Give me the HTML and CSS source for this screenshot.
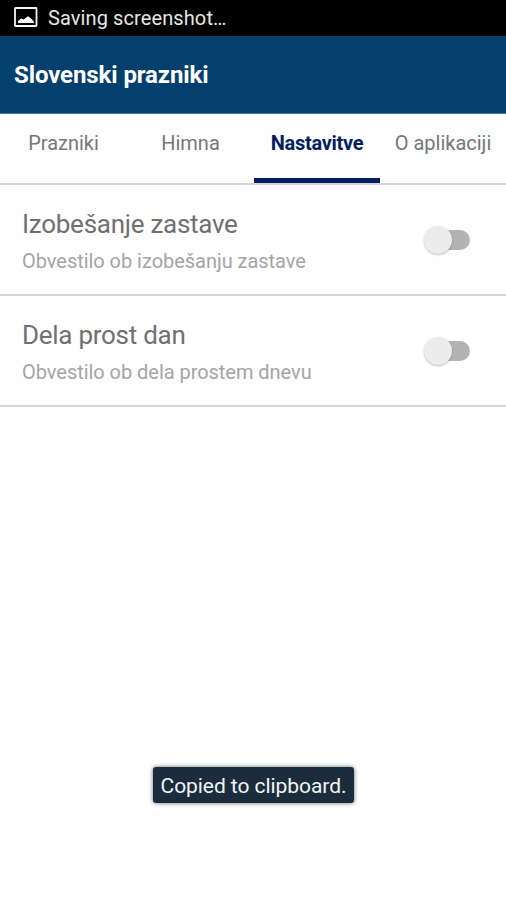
FILE: index.html
```html
<!DOCTYPE html>
<html lang="sl">
<head>
<meta charset="utf-8">
<title>Slovenski prazniki</title>
<link rel="stylesheet" href="styles.css">
</head>
<body>
<div class="screen">
  <div class="status">
    <svg class="status-icon" width="24" height="20" viewBox="0 0 24 20"><rect x="1" y="1" width="21.5" height="18" rx=".5" fill="none" stroke="#f4f4f4" stroke-width="1.8"/><path d="M4 16v-2l3.2-2.5 2.3 1L14 9.2 16.5 11l3.3 3.5V16z" fill="#fff"/></svg>
    <span class="status-text">Saving screenshot…</span>
  </div>
  <header class="bar"><h1 class="title">Slovenski prazniki</h1></header>
  <nav class="tabs">
    <div class="tab">Prazniki</div>
    <div class="tab">Himna</div>
    <div class="tab active">Nastavitve</div>
    <div class="tab">O aplikaciji</div>
  </nav>
  <main>
    <section class="row">
      <div><h2 class="name">Izobešanje zastave</h2><p class="desc">Obvestilo ob izobešanju zastave</p></div>
      <div class="switch"><i class="thumb"></i></div>
    </section>
    <section class="row">
      <div><h2 class="name">Dela prost dan</h2><p class="desc">Obvestilo ob dela prostem dnevu</p></div>
      <div class="switch"><i class="thumb"></i></div>
    </section>
  </main>
  <div class="toast">Copied to clipboard.</div>
</div>
</body>
</html>
```
FILE: styles.css
```css
* { box-sizing: border-box; }
body, h1, h2, p { margin: 0; font-weight: 400; }
body { background: #fff; font-family: Roboto, sans-serif; }
.screen { position: relative; width: 506px; height: 900px; overflow: hidden; background: #fefefe; }
.status { height: 36px; background: #000; color: #e6e6e6; display: flex; align-items: center; padding: 0 0 2px 14px; gap: 10px; font-size: 20px; }
.status-text { padding-top: 2px; letter-spacing: .1px; }
.bar { height: 78px; background: #03406d; border-bottom: 1px solid #52738c; display: flex; align-items: center; padding: 1px 0 0 14px; }
.title { color: #fff; font-size: 24px; font-weight: 700; letter-spacing: -.1px; }
.tabs { height: 71px; display: grid; grid-template-columns: 127px 127px 126px 126px; border-bottom: 2px solid #d5d5d5; }
.tab { text-align: center; color: #777; font-size: 20px; line-height: 24px; padding-top: 17px; white-space: nowrap; }
.tab.active { color: #041f60; font-weight: 700; letter-spacing: -.3px; border-bottom: 5px solid #041f60; }
.row { height: 111px; border-bottom: 2px solid #d5d5d5; padding: 23px 36px 0 22px; display: flex; justify-content: space-between; }
.name { color: #707070; font-size: 26px; line-height: 32px; letter-spacing: -.27px; }
.desc { color: #a5a5a5; font-size: 20px; line-height: 24px; margin-top: 9px; letter-spacing: -.04px; }
.switch { position: relative; width: 42px; height: 20px; margin-top: 22px; border-radius: 10px; background: #b3b3b3; }
.thumb { position: absolute; left: -4px; top: -4px; width: 28px; height: 28px; border-radius: 50%; background: #ececec; box-shadow: 0 1px 2px rgba(0,0,0,.25); }
.toast { position: absolute; left: 153px; top: 767px; width: 201px; height: 36px; border-radius: 3px; background: #1b2d3d; color: #f4f4f4; font-size: 21px; line-height: 38px; letter-spacing: -.06px; text-align: center; box-shadow: 0 0 4px rgba(0,0,0,.6); }
```
